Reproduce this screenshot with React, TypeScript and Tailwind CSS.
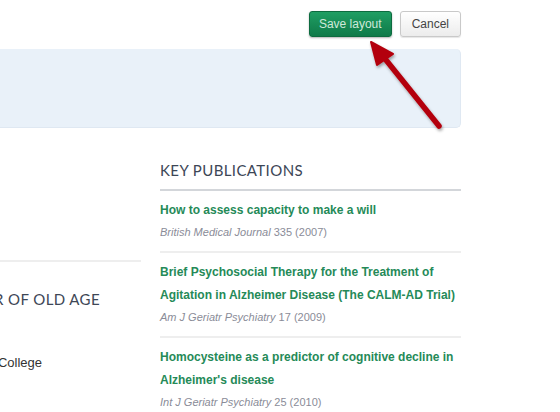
import React from "react";

const pubs = [
  {
    title: "How to assess capacity to make a will",
    journal: "British Medical Journal",
    rest: " 335 (2007)",
  },
  {
    title:
      "Brief Psychosocial Therapy for the Treatment of Agitation in Alzheimer Disease (The CALM-AD Trial)",
    journal: "Am J Geriatr Psychiatry",
    rest: " 17 (2009)",
  },
  {
    title: "Homocysteine as a predictor of cognitive decline in Alzheimer's disease",
    journal: "Int J Geriatr Psychiatry",
    rest: " 25 (2010)",
  },
];

export default function App() {
  return (
    <div
      className="relative w-[560px] h-[412px] overflow-hidden bg-white"
      style={{ fontFamily: "'Liberation Sans', Arial, sans-serif" }}
    >
      <div className="w-[461px]">
        <div className="flex justify-end gap-2 pt-[11px]">
          <button className="h-[26px] px-[9px] rounded-[3px] border border-[#0d6b3f] bg-gradient-to-b from-[#1f9e63] to-[#0f7a49] text-[12px] text-[#cfe9da] shadow-[0_1px_2px_rgba(0,0,0,0.3)]">
            Save layout
          </button>
          <button className="h-[26px] px-[11px] rounded-[3px] border border-[#c9c9c9] bg-gradient-to-b from-[#ffffff] to-[#ececec] text-[12px] text-[#444] shadow-[0_1px_1px_rgba(0,0,0,0.1)]">
            Cancel
          </button>
        </div>
        <div className="mt-[12px] h-[79px] rounded-r-[5px] bg-[#e9f1f9] border-r border-b border-[#dfe8f2]" />
        <div className="flex gap-[19px]">
          <div className="w-[141px] shrink-0">
            <div className="h-[134px] border-b-2 border-[#eeeeee]" />
            <div className="-ml-[200px] w-[341px] pt-[27px]">
              <div
                className="w-[300px] text-right text-[15px] tracking-[0.4px] text-[#3e4756] leading-[20px] whitespace-nowrap"
                style={{ fontFamily: "Lato, 'Open Sans', sans-serif" }}
              >
                PROFESSOR OF OLD AGE
              </div>
              <div className="h-[44px]" />
              <div className="w-[242px] text-right text-[13px] text-[#333] leading-[20px] whitespace-nowrap">
                University College
              </div>
            </div>
            <div className="mt-[39px] w-[145px] border-b-2 border-dashed border-[#d4d4d4]" />
          </div>
          <div className="w-[301px]">
            <div
              className="pt-[32px] pb-[9px] text-[15px] tracking-[0.4px] text-[#3c4656] leading-[20px]"
              style={{ fontFamily: "Lato, 'Open Sans', sans-serif" }}
            >
              KEY PUBLICATIONS
            </div>
            <div className="border-t-2 border-[#d3d6da]" />
            {pubs.map((p, i) => (
              <div
                key={i}
                className={`pt-[8px] pb-[9px] ${i < 2 ? "border-b-2 border-[#eeeeee]" : ""}`}
              >
                <div className="text-[12px] font-bold text-[#258a58] leading-[23px]">
                  {p.title}
                </div>
                <div className="text-[11px] text-[#8a8c98] leading-[20px]">
                  <span className="italic">{p.journal}</span>
                  {p.rest}
                </div>
              </div>
            ))}
          </div>
        </div>
      </div>
      <svg
        className="absolute left-0 top-0 pointer-events-none"
        width="560"
        height="412"
        viewBox="0 0 560 412"
      >
        <defs>
          <filter id="sh" x="-20%" y="-20%" width="140%" height="140%">
            <feDropShadow dx="1" dy="2" stdDeviation="1.5" floodColor="#000" floodOpacity="0.35" />
          </filter>
        </defs>
        <g filter="url(#sh)">
          <line x1="382" y1="55" x2="439" y2="126" stroke="#b3060d" strokeWidth="5.5" strokeLinecap="round" />
          <polygon points="371,42 393,54 377,65" fill="#b3060d" stroke="#b3060d" strokeWidth="2" strokeLinejoin="round" />
        </g>
      </svg>
    </div>
  );
}
